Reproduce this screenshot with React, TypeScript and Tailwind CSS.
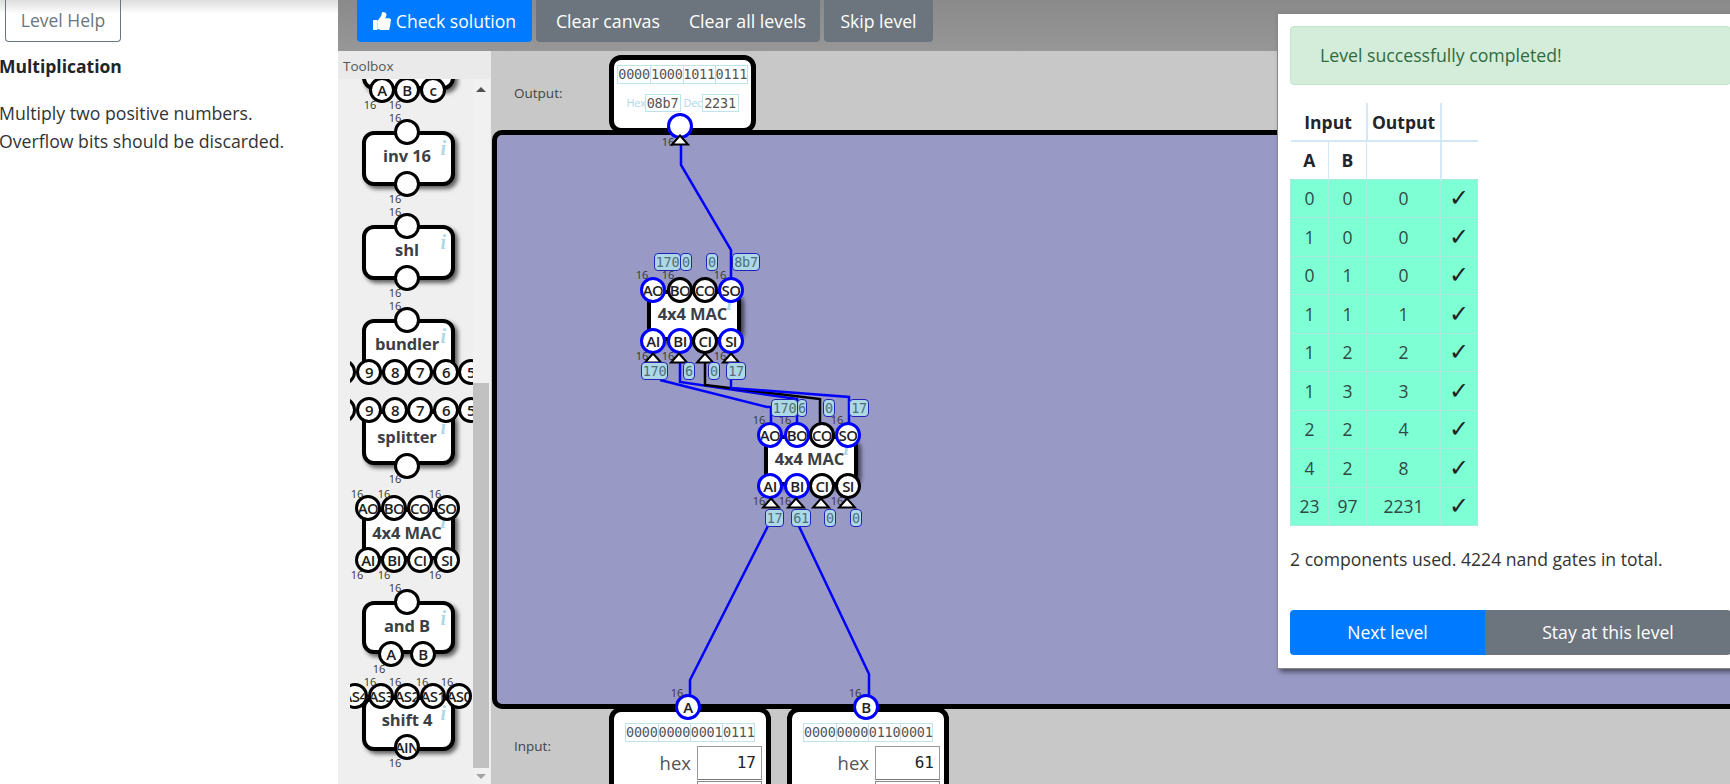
import React from "react";

const font = "[font-family:'Open_Sans','Noto_Sans',sans-serif]";
type P = { x: number; y: number; t?: string; blue?: boolean };
type L = { x: number; y: number; t: string };

function Pin({ x, y, t, blue }: P) {
  return (
    <div
      style={{ left: x, top: y }}
      className={`absolute z-10 flex h-[26px] w-[26px] -translate-x-1/2 -translate-y-1/2 items-center justify-center overflow-hidden rounded-full bg-white text-[15px] font-semibold tracking-[-0.6px] text-[#222] ${blue ? "border-[3px] border-[#0000ff]" : "border-[3px] border-black"}`}
    >
      {t}
    </div>
  );
}

function Tiny({ x, y, t }: L) {
  return (
    <span style={{ left: x, top: y }} className="absolute z-20 -translate-x-1/2 -translate-y-1/2 text-[11px] leading-none text-[#333]">
      {t}
    </span>
  );
}

function Box({ w, h, label, infoTop, pins, tiny, noInfo, lift = "pb-[4px]" }: { w: number; h: number; label: string; infoTop?: number; pins: P[]; tiny: L[]; noInfo?: boolean; lift?: string }) {
  return (
    <div style={{ width: w, height: h }} className="relative shrink-0 rounded-[12px] border-[4px] border-black bg-white shadow-[3px_3px_4px_rgba(0,0,0,0.6)]">
      <div className={`flex h-full items-center justify-center pr-[3px] text-[16.5px] font-bold tracking-[-0.1px] text-[#3b4046] ${lift}`}>{label}</div>
      {!noInfo && (
        <span style={{ top: infoTop ?? 3 }} className="absolute right-[5px] font-['Liberation_Serif',serif] text-[20px] font-bold italic leading-none text-[#add8e6]">
          i
        </span>
      )}
      {pins.map((p, i) => (
        <Pin key={i} {...p} x={p.x - 4} y={p.y - 4} />
      ))}
      {tiny.map((p, i) => (
        <Tiny key={i} {...p} x={p.x - 4} y={p.y - 4} />
      ))}
    </div>
  );
}

function Val({ x, y, w, t }: { x: number; y: number; w: number; t: string }) {
  return (
    <span
      style={{ left: x, top: y, width: w }}
      className="absolute z-20 flex h-[18px] items-center justify-center rounded-[4px] border border-[#2222bb] bg-[#add8e6] font-['DejaVu_Sans_Mono',monospace] text-[13.5px] tracking-[-0.3px] text-[#4f6f78]"
    >
      {t}
    </span>
  );
}

function Tri({ x, y }: { x: number; y: number }) {
  return (
    <svg style={{ left: x - 10, top: y - 1 }} className="absolute z-10" width="20" height="12" viewBox="0 0 20 12">
      <path d="M10 1.5 L18 10.5 L2 10.5 Z" fill="#fff" stroke="#000" strokeWidth="2" strokeLinejoin="miter" />
    </svg>
  );
}

function Bits({ groups }: { groups: string[] }) {
  return (
    <div className="flex border border-[#bde3ec]">
      {groups.map((g, i) => (
        <span key={i} className={`flex h-[17px] w-[32.25px] items-center justify-center font-['DejaVu_Sans_Mono',monospace] text-[13.5px] tracking-[-0.2px] text-[#555] ${i ? "border-l border-[#bde3ec]" : ""}`}>
          {g}
        </span>
      ))}
    </div>
  );
}

function Mac({ ox, oy, h, pb, pt }: { ox: number; oy: number; h: number; pb: boolean[]; pt: boolean[] }) {
  const xsT = [6, 33, 58, 84];
  return (
    <div style={{ left: ox, top: oy }} className="absolute z-10">
      <Box
        w={94}
        h={h}
        label="4x4 MAC"
        infoTop={-1}
        lift="pb-[2px]"
        pins={[
          ...["AO", "BO", "CO", "SO"].map((t, i) => ({ x: xsT[i], y: 0, t, blue: pt[i] })),
          ...["AI", "BI", "CI", "SI"].map((t, i) => ({ x: xsT[i], y: h, t, blue: pb[i] })),
        ]}
        tiny={[
          { x: -5, y: -16, t: "16" },
          { x: 21, y: -16, t: "16" },
          { x: 73, y: -16, t: "16" },
          { x: -5, y: h + 14, t: "16" },
          { x: 21, y: h + 14, t: "16" },
          { x: 73, y: h + 14, t: "16" },
        ]}
      />
    </div>
  );
}

function InputNode({ name, bits, value }: { name: string; bits: string[]; value: string }) {
  return (
    <div className="relative h-[90px] w-[162px] rounded-[12px] border-[5px] border-black bg-white pl-[11px] pr-[2px] pt-[11px]">
      <div className="w-[130px]">
        <Bits groups={bits} />
      </div>
      <div className="mt-[4px] flex items-center justify-end gap-[6px] pr-[2px]">
        <span className="text-[18.5px] text-[#555]">hex</span>
        <span className="flex h-[34px] w-[65px] items-center justify-end border border-t-[#999] border-r-[#999] border-b-[#777] border-l-[#999] pr-[5px] font-['DejaVu_Sans_Mono',monospace] text-[16px] text-[#222]">
          {value}
        </span>
      </div>
      <div className="mt-[1px] ml-auto mr-[2px] h-[20px] w-[65px] border border-[#888]" />
      <Pin x={74} y={-5} t={name} blue />
      <Tiny x={63} y={-20} t="16" />
    </div>
  );
}

const rows = [
  ["0", "0", "0"],
  ["1", "0", "0"],
  ["0", "1", "0"],
  ["1", "1", "1"],
  ["1", "2", "2"],
  ["1", "3", "3"],
  ["2", "2", "4"],
  ["4", "2", "8"],
  ["23", "97", "2231"],
];

export default function App() {
  const px = 492;
  const py = 130;
  const m1 = { x: 647, y: 290, h: 51 };
  const m2 = { x: 764, y: 435, h: 51 };
  const toPts = (a: number[][]) => a.map(([x, y]) => `${x - px},${y - py}`).join(" ");
  return (
    <div className={`relative flex h-[784px] w-[1730px] overflow-hidden bg-white ${font} text-[#212529]`}>
      <aside className="relative h-full w-[338px] shrink-0 bg-white">
        <div className="absolute inset-x-0 top-0 h-[14px] bg-gradient-to-b from-[#dddddd] to-white" />
        <div className="relative ml-[5px] flex h-[42px] w-[116px] items-center justify-center rounded-b-[4px] border border-t-0 border-[#6c757d] text-[17.5px] text-[#6c757d]">Level Help</div>
        <h2 className="relative mt-[13px] -ml-[1px] text-[17.5px] font-bold leading-[22px] text-[#212529]">Multiplication</h2>
        <p className="relative mt-[22px] -ml-[1px] text-[17.7px] leading-[28px] text-[#333]">
          Multiply two positive numbers.
          <br />
          Overflow bits should be discarded.
        </p>
      </aside>

      <main className="flex min-w-0 flex-1 flex-col">
        <div className="flex h-[51px] shrink-0 items-start gap-[4px] bg-gradient-to-b from-[#8a8a8a] to-[#979797] pl-[19px]">
          <div className="flex h-[42px] w-[175px] items-center justify-center gap-[5px] rounded-b-[4px] bg-[#007bff] text-[17.6px] text-white">
            <svg width="18" height="18" viewBox="0 0 512 512" fill="#fff"><path d="M104 224H24c-13 0-24 11-24 24v240c0 13 11 24 24 24h80c13 0 24-11 24-24V248c0-13-11-24-24-24zM384 81c0 42-26 66-33 95h102c34 0 60 28 60 59 0 19-8 39-20 52 13 30 11 59-8 85 9 28 0 61-18 80 5 20 3 37-7 50-23 33-80 34-129 34h-3c-54 0-98-20-134-36-18-8-41-17-59-18-7 0-13-6-13-12V256c0-3 1-6 4-9 40-39 57-81 90-114 15-15 20-38 26-60C247 55 253 16 272 0c64 0 112 23 112 81z"/></svg>
            Check solution
          </div>
          <div className="flex h-[42px] w-[284px] items-center justify-center gap-[29px] rounded-b-[4px] bg-[#6c757d] pl-[6px] text-[17.8px] text-white">
            <span>Clear canvas</span>
            <span>Clear all levels</span>
          </div>
          <div className="flex h-[42px] w-[109px] items-center justify-center rounded-b-[4px] bg-[#6c757d] text-[17.6px] text-white">Skip level</div>
        </div>

        <div className="flex min-h-0 flex-1">
          <div className="flex w-[153px] shrink-0 flex-col bg-[#efefef]">
            <div className="flex h-[28px] shrink-0 items-center bg-[#eaeaea] pl-[5px] pt-[3px] text-[13.5px] text-[#555]">Toolbox</div>
            <div className="flex min-h-0 flex-1">
              <div className="ml-[12px] min-h-0 w-[123px] overflow-hidden">
                <div className="flex flex-col pl-[12px]">
                  <div className="-mt-[44px]">
                    <Box w={93} h={55} label="" noInfo pins={[{ x: 20, y: 55, t: "A" }, { x: 45, y: 55, t: "B" }, { x: 71, y: 55, t: "c" }]} tiny={[{ x: 8, y: 69, t: "16" }, { x: 33, y: 69, t: "16" }]} />
                  </div>
                  <div className="mt-[41px]">
                    <Box w={93} h={55} label="inv 16" pins={[{ x: 45, y: 1 }, { x: 45, y: 53 }]} tiny={[{ x: 33, y: -14, t: "16" }, { x: 33, y: 67, t: "16" }]} />
                  </div>
                  <div className="mt-[39px]">
                    <Box w={93} h={55} label="shl" pins={[{ x: 45, y: 1 }, { x: 45, y: 53 }]} tiny={[{ x: 33, y: -14, t: "16" }, { x: 33, y: 67, t: "16" }]} />
                  </div>
                  <div className="mt-[39px]">
                    <Box w={93} h={55} label="bundler" pins={[{ x: 45, y: 1 }, { x: -19, y: 53, t: "" }, { x: 7, y: 53, t: "9" }, { x: 33, y: 53, t: "8" }, { x: 58, y: 53, t: "7" }, { x: 84, y: 53, t: "6" }, { x: 109, y: 53, t: "5" }]} tiny={[{ x: 33, y: -14, t: "16" }]} />
                  </div>
                  <div className="mt-[36px]">
                    <Box w={93} h={55} label="splitter" lift="pb-0" pins={[{ x: -19, y: 0, t: "" }, { x: 7, y: 0, t: "9" }, { x: 33, y: 0, t: "8" }, { x: 58, y: 0, t: "7" }, { x: 84, y: 0, t: "6" }, { x: 109, y: 0, t: "5" }, { x: 45, y: 56 }]} tiny={[{ x: 33, y: 68, t: "16" }]} />
                  </div>
                  <div className="mt-[43px]">
                    <Box w={93} h={52} label="4x4 MAC" lift="pb-[1px]" infoTop={-1} pins={[["AO", 6, 0], ["BO", 32, 0], ["CO", 58, 0], ["SO", 85, 0], ["AI", 6, 52], ["BI", 32, 52], ["CI", 58, 52], ["SI", 85, 52]].map(([t, x, y]) => ({ t: t as string, x: x as number, y: y as number }))} tiny={[{ x: -5, y: -15, t: "16" }, { x: 22, y: -15, t: "16" }, { x: 73, y: -15, t: "16" }, { x: -5, y: 66, t: "16" }, { x: 22, y: 66, t: "16" }, { x: 73, y: 66, t: "16" }]} />
                  </div>
                  <div className="mt-[41px]">
                    <Box w={93} h={53} label="and B" lift="pb-[3px]" pins={[{ x: 45, y: 1 }, { x: 29, y: 53, t: "A" }, { x: 61, y: 53, t: "B" }]} tiny={[{ x: 33, y: -14, t: "16" }, { x: 17, y: 67, t: "16" }]} />
                  </div>
                  <div className="mt-[42px]">
                    <Box w={93} h={55} label="shift 4" lift="pb-[6px]" pins={[{ x: -7, y: 0, t: "AS4" }, { x: 19, y: 0, t: "AS3" }, { x: 45, y: 0, t: "AS2" }, { x: 71, y: 0, t: "AS1" }, { x: 97, y: 0, t: "AS0" }, { x: 45, y: 51, t: "AIN" }]} tiny={[{ x: 8, y: -15, t: "16" }, { x: 33, y: -15, t: "16" }, { x: 60, y: -15, t: "16" }, { x: 85, y: -15, t: "16" }, { x: 33, y: 66, t: "16" }]} />
                  </div>
                </div>
              </div>
              <div className="relative w-[16px] shrink-0 bg-[#f1f1f1]">
                <span className="absolute left-[3px] top-[8px] h-0 w-0 border-x-[5px] border-b-[5px] border-x-transparent border-b-[#505050]" />
                <div className="absolute inset-x-0 top-[304px] h-[385px] bg-[#c1c1c1]" />
                <span className="absolute left-[3px] top-[695px] h-0 w-0 border-x-[5px] border-t-[5px] border-x-transparent border-t-[#a3a3a3]" />
              </div>
              <div className="w-[2px] shrink-0" />
            </div>
          </div>

          <div className="flex min-w-0 flex-1 flex-col bg-[#c8c8c8] pl-[1px]">
            <div className="flex h-[79px] shrink-0 items-start">
              <span className="mt-[33px] ml-[22px] w-[95px] text-[13.5px] leading-[18px] text-[#444]">Output:</span>
              <div className="relative z-10 mt-[4px] h-[78px] w-[147px] rounded-[12px] border-[5px] border-black bg-white px-[3px] pt-[5px]">
                <Bits groups={["0000", "1000", "1011", "0111"]} />
                <div className="mt-[10px] flex items-center justify-center gap-0 text-[#add8e6]">
                  <span className="w-[18px] whitespace-nowrap text-[11px] tracking-[-0.3px]">Hex</span>
                  <span className="flex h-[18px] w-[36px] items-center justify-center border border-[#bde3ec] font-['DejaVu_Sans_Mono',monospace] text-[13.5px] tracking-[-0.2px] text-[#555]">08b7</span>
                  <span className="ml-[3px] w-[18px] whitespace-nowrap text-[11px] tracking-[-0.3px]">Dec</span>
                  <span className="flex h-[18px] w-[37px] items-center justify-center border border-[#bde3ec] font-['DejaVu_Sans_Mono',monospace] text-[13.5px] tracking-[-0.2px] text-[#555]">2231</span>
                </div>
                <Pin x={66} y={66} blue />
                <Tiny x={54} y={81} t="16" />
                <div className="absolute left-[57px] top-[75px] z-30">
                  <Tri x={9} y={0} />
                </div>
              </div>
            </div>

            <div className="relative h-[579px] w-[1400px] shrink-0 rounded-[10px] border-[5px] border-black bg-[#9999c6]">
              <div className="absolute -left-[5px] -top-[5px]">
                <svg className="absolute left-0 top-0 overflow-visible" width="10" height="10" fill="none">
                  <polyline points={toPts([[681, 130], [681, 165], [731, 250], [731, 290]])} stroke="#0000ff" strokeWidth="2.5" />
                  <polyline points={toPts([[660, 380], [767, 407], [771, 407], [771, 435]])} stroke="#0000ff" strokeWidth="2.5" />
                  <polyline points={toPts([[680, 360], [680, 382], [797, 399], [797, 435]])} stroke="#0000ff" strokeWidth="2.5" />
                  <polyline points={toPts([[705, 360], [705, 385], [820, 399], [820, 435]])} stroke="#000" strokeWidth="2.5" />
                  <polyline points={toPts([[731, 378], [731, 388], [849, 397], [849, 435]])} stroke="#0000ff" strokeWidth="2.5" />
                  <polyline points={toPts([[771, 520], [690, 680], [690, 710]])} stroke="#0000ff" strokeWidth="2.5" />
                  <polyline points={toPts([[796, 520], [869, 674], [869, 710]])} stroke="#0000ff" strokeWidth="2.5" />
                </svg>
                <Mac ox={m1.x - px} oy={m1.y - py} h={m1.h} pt={[true, false, false, true]} pb={[true, true, false, true]} />
                <Mac ox={m2.x - px} oy={m2.y - py} h={m2.h} pt={[true, true, false, true]} pb={[true, true, false, false]} />
                {[
                  [654, 253, 27, "170"], [680, 253, 12, "0"], [706, 253, 12, "0"], [732, 253, 28, "8b7"],
                  [641, 362, 27, "170"], [683, 362, 12, "6"], [708, 362, 12, "0"], [726, 362, 20, "17"],
                  [771, 399, 27, "170"], [797, 399, 10, "6"], [823, 399, 12, "0"], [849, 399, 20, "17"],
                  [765, 509, 19, "17"], [791, 509, 20, "61"], [824, 509, 12, "0"], [850, 509, 12, "0"],
                ].map(([x, y, w, t], i) => (
                  <Val key={i} x={(x as number) - px} y={(y as number) - py} w={w as number} t={t as string} />
                ))}
                {[[653, 353], [679, 353], [705, 353], [731, 353], [771, 498], [796, 498], [821, 498], [847, 498]].map(([x, y], i) => (
                  <Tri key={i} x={x - px} y={y - py} />
                ))}
              </div>
            </div>

            <div className="relative z-10 -mt-[2px] flex min-h-0 flex-1 items-start">
              <span className="mt-[30px] ml-[22px] w-[95px] text-[13.5px] leading-[18px] text-[#444]">Input:</span>
              <InputNode name="A" bits={["0000", "0000", "0001", "0111"]} value="17" />
              <div className="ml-[16px]">
                <InputNode name="B" bits={["0000", "0000", "0110", "0001"]} value="61" />
              </div>
            </div>
          </div>
        </div>
      </main>

      <div className="absolute left-[1277px] top-[13px] z-40 flex h-[656px] w-[470px] flex-col border border-[#888] bg-white px-[12px] pt-[12px] shadow-[3px_3px_5px_rgba(0,0,0,0.5)]">
        <div className="flex h-[59px] w-[441px] shrink-0 items-center rounded-[4px] border border-[#c3e6cb] bg-[#d4edda] pl-[29px] text-[17.7px] text-[#2f6b40]">Level successfully completed!</div>
        <table className="mt-[18px] w-[187px] table-fixed border-collapse text-center text-[17.5px] leading-[24px]">
          <colgroup>
            <col className="w-[38px]" />
            <col className="w-[38px]" />
            <col className="w-[74px]" />
            <col className="w-[37px]" />
          </colgroup>
          <thead>
            <tr className="h-[38px]">
              <th colSpan={2} className="border-r-2 border-b-2 border-[#d2e9f5] font-bold">Input</th>
              <th className="border-r-2 border-b-2 border-[#d2e9f5] font-bold">Output</th>
              <th className="border-b-2 border-[#d2e9f5]" />
            </tr>
            <tr className="h-[38px]">
              <th className="border-r border-[#d2e9f5] font-bold">A</th>
              <th className="border-r border-[#d2e9f5] font-bold">B</th>
              <th className="border-r-2 border-[#d2e9f5]" />
              <th className="border-l-0 border-[#d2e9f5]" />
            </tr>
          </thead>
          <tbody>
            {rows.map((r, i) => (
              <tr key={i} className="h-[38.5px] bg-[#7fffd4] text-[#2f4a44]">
                {r.map((c, j) => (
                  <td key={j} className="border border-[#a8ebdc] p-0">{c}</td>
                ))}
                <td className="border border-[#a8ebdc] p-0 text-[#222]">
                  <span className="text-[24px] leading-none">✓</span>
                </td>
              </tr>
            ))}
          </tbody>
        </table>
        <p className="mt-[21px] text-[17.6px] leading-[24px] text-[#333]">2 components used. 4224 nand gates in total.</p>
        <div className="mt-[39px] flex h-[45px] w-[441px] shrink-0 overflow-hidden rounded-[4px] text-[17.6px] text-white">
          <div className="flex w-[195px] items-center justify-center bg-[#007bff]">Next level</div>
          <div className="flex flex-1 items-center justify-center bg-[#6c757d]">Stay at this level</div>
        </div>
      </div>
    </div>
  );
}
